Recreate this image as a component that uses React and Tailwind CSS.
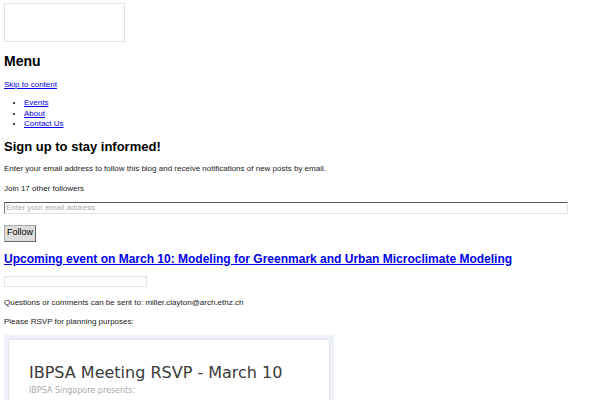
export default function App() {
  return (
    <div className="w-[600px] h-[400px] overflow-hidden bg-white text-black font-['Liberation_Sans',Arial,sans-serif]">
      <div className="px-1 pt-[3px]">
        {/* logo placeholder */}
        <div className="w-[121px] h-[39px] border border-[#e2e2e2]" />

        <h2 className="mt-[10px] text-[14px] font-bold leading-[18px]">Menu</h2>

        <a href="#" className="mt-[10px] block text-[8px] leading-[10px] text-[#0000ee] underline">
          Skip to content
        </a>

        <ul className="mt-[8px] pl-[20px] list-disc text-[8px] leading-[10.5px]">
          <li><a href="#" className="text-[#0000ee] underline">Events</a></li>
          <li><a href="#" className="text-[#0000ee] underline">About</a></li>
          <li><a href="#" className="text-[#0000ee] underline">Contact Us</a></li>
        </ul>

        <h2 className="mt-[9px] text-[13px] font-bold leading-[16px]">Sign up to stay informed!</h2>

        <p className="mt-[9px] text-[8px] leading-[10px] text-[#222]">
          Enter your email address to follow this blog and receive notifications of new posts by email.
        </p>
        <p className="mt-[10px] text-[8px] leading-[10px] text-[#222]">Join 17 other followers</p>

        <input
          type="email"
          placeholder="Enter your email address"
          className="mt-[8px] block w-[564px] h-[12px] px-[1px] text-[8px] leading-[10px] border border-[#e4e4e4] border-t-[#555] border-l-[#777] placeholder:text-[#aaa] outline-none"
        />

        <button className="mt-[11px] block h-[17px] px-[2px] text-[9px] bg-[#ddd] border border-[#aaa] border-b-[#666] border-r-[#666]">
          Follow
        </button>

        <h1 className="mt-[9px] text-[12px] font-bold leading-[16px]">
          <a href="#" className="text-[#0000ee] underline">
            Upcoming event on March 10: Modeling for Greenmark and Urban Microclimate Modeling
          </a>
        </h1>

        <div className="mt-[9px] w-[143px] h-[11px] border border-[#e2e2e2]" />

        <p className="mt-[11px] text-[8px] leading-[10px] text-[#222]">
          Questions or comments can be sent to: miller.clayton@arch.ethz.ch
        </p>
        <p className="mt-[9px] text-[8px] leading-[10px] text-[#222]">Please RSVP for planning purposes:</p>

        {/* embedded form */}
        <div className="mt-[8px] w-[330px] h-[80px] bg-[#eef1f7] p-[5px]">
          <div className="h-full bg-white shadow-[0_0_2px_rgba(0,0,0,0.15)] pl-[20px] pt-[23px] font-['DejaVu_Sans',sans-serif]">
            <div className="text-[16px] leading-[20px] text-[#3a3a3a]">IBPSA Meeting RSVP - March 10</div>
            <div className="mt-[3px] text-[8px] leading-[9px] text-[#aaa]">IBPSA Singapore presents:</div>
          </div>
        </div>
      </div>
    </div>
  );
}
